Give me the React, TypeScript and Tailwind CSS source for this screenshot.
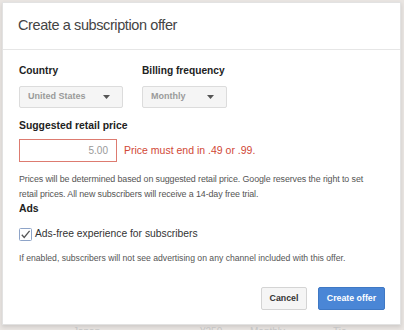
import React from 'react';

function Caret() {
  return (
    <svg width="7" height="4" viewBox="0 0 7 4" className="shrink-0">
      <path d="M0 0h7L3.5 4z" fill="#555" />
    </svg>
  );
}

function Select({ value, width }: { value: string; width: string }) {
  return (
    <div
      className={`${width} h-[22px] flex items-center justify-between pl-[8px] pr-[12px] bg-[#f5f5f5] border border-[#dcdcdc] rounded-[2px] text-[9px] font-bold text-[#9a9a9a]`}
    >
      <span>{value}</span>
      <Caret />
    </div>
  );
}

export default function App() {
  return (
    <div className="h-[330px] w-[404px] overflow-hidden bg-[#e9e5e2] font-['Liberation_Sans',Arial,sans-serif]">
      <div className="ml-[2px] mt-[2px] w-[399px] h-[323px] overflow-hidden bg-white border border-[#e2e2e2] shadow-[0_2px_4px_rgba(0,0,0,0.12)] flex flex-col">
        {/* Header */}
        <div className="h-[47px] shrink-0 border-b border-[#e6e6e6] px-[15px] flex items-center text-[14.5px] tracking-[-0.4px] text-[#444]">
          Create a subscription offer
        </div>

        {/* Body */}
        <div className="px-[16px] pt-[14px] flex flex-col">
          <div className="flex gap-[19px]">
            <div className="flex flex-col gap-[8px]">
              <span className="text-[10.2px] font-bold text-[#222] leading-[14px]">Country</span>
              <Select value="United States" width="w-[104px]" />
            </div>
            <div className="flex flex-col gap-[8px]">
              <span className="text-[10.2px] font-bold text-[#222] leading-[14px]">Billing frequency</span>
              <Select value="Monthly" width="w-[85px]" />
            </div>
          </div>

          <span className="mt-[11px] text-[10.4px] font-bold text-[#222] leading-[14px]">Suggested retail price</span>
          <div className="mt-[6px] flex items-center gap-[7px]">
            <div className="w-[98px] h-[23px] border border-[#dd7b70] flex items-center justify-end pr-[8px] text-[10px] text-[#999]">
              5.00
            </div>
            <span className="text-[10.5px] text-[#d14836]">Price must end in .49 or .99.</span>
          </div>

          <p className="mt-[10px] text-[8.9px] leading-[15px] tracking-[-0.1px] text-[#555] whitespace-nowrap">
            Prices will be determined based on suggested retail price. Google reserves the right to set
            <br />
            retail prices. All new subscribers will receive a 14-day free trial.
          </p>

          <span className="mt-[0px] text-[10.4px] font-bold text-[#222] leading-[14px]">Ads</span>
          <div className="mt-[10px] h-[16px] flex items-center gap-[3px]">
            <svg width="13" height="13" viewBox="0 0 13 13">
              <rect x="0.5" y="0.5" width="12" height="12" rx="1" fill="#fff" stroke="#8ea4c8" />
              <path d="M2.8 6.8l2.4 2.6L10.6 2.8" fill="none" stroke="#555" strokeWidth="1.3" />
            </svg>
            <span className="text-[10.3px] text-[#333]">Ads-free experience for subscribers</span>
          </div>
          <p className="mt-[9px] text-[8.65px] leading-[14px] text-[#555] whitespace-nowrap">
            If enabled, subscribers will not see advertising on any channel included with this offer.
          </p>

          <div className="mt-[22px] -mr-[1px] flex justify-end gap-[11px]">
            <button className="w-[46px] h-[23px] bg-[#f5f5f5] border border-[#d4d4d4] rounded-[2px] text-[8.8px] font-bold text-[#333]">
              Cancel
            </button>
            <button className="w-[67px] h-[23px] bg-[#4a86d6] border border-[#3f78c4] rounded-[2px] text-[8.8px] font-bold text-white">
              Create offer
            </button>
          </div>
        </div>
      </div>
      <div className="flex text-[10px] text-[#c4c4c4] leading-[12px] mt-[1px] whitespace-nowrap">
        <span className="ml-[73px] w-[127px]">Japan</span>
        <span className="w-[50px]">¥250</span>
        <span className="w-[83px]">Monthly</span>
        <span>Tie</span>
      </div>
    </div>
  );
}
